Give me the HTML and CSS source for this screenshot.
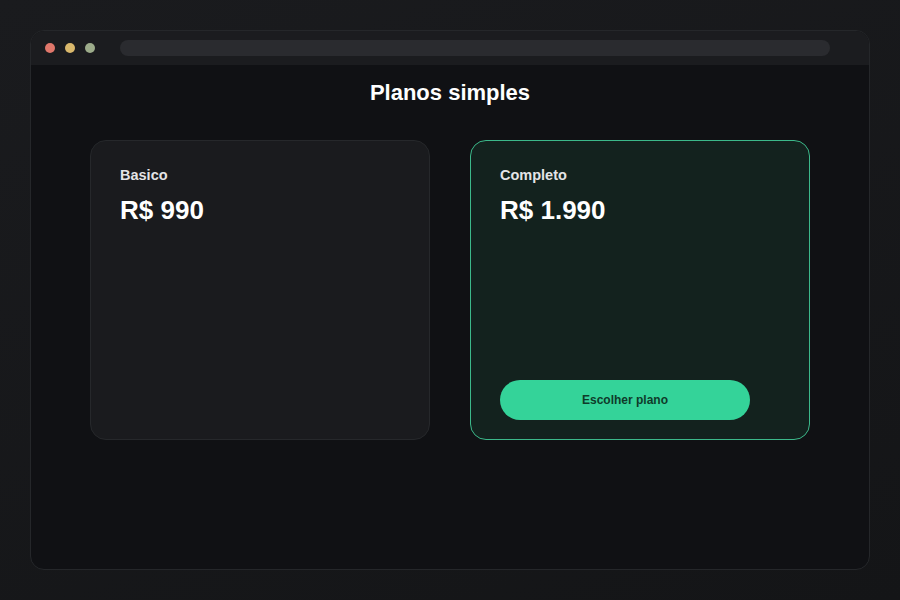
FILE: index.html
```html
<!DOCTYPE html>
<html lang="pt">
<head>
    <meta charset="UTF-8">
    <meta name="viewport" content="width=device-width, initial-scale=1.0">
    <title>Planos simples</title>
    <link rel="stylesheet" href="styles.css">
</head>
<body>
    <div class="window">
        <div class="titlebar">
            <span class="dot red"></span>
            <span class="dot yellow"></span>
            <span class="dot green"></span>
            <div class="address"></div>
        </div>
        <div class="content">
            <h1>Planos simples</h1>
            <div class="plans">
                <div class="card">
                    <div class="plan-name">Basico</div>
                    <div class="price">R$ 990</div>
                </div>
                <div class="card featured">
                    <div class="plan-name">Completo</div>
                    <div class="price">R$ 1.990</div>
                    <button class="choose">Escolher plano</button>
                </div>
            </div>
        </div>
    </div>
</body>
</html>
```

FILE: styles.css
```css
body {
    margin: 0;
    height: 600px;
    background: linear-gradient(160deg, #1a1b1e 0%, #141517 100%);
    font-family: "Liberation Sans", Arial, sans-serif;
    overflow: hidden;
}
.window {
    margin: 30px;
    height: 538px;
    border: 1px solid #25272a;
    border-radius: 14px;
    background-color: #101114;
    overflow: hidden;
    display: flex;
    flex-direction: column;
}
.titlebar {
    height: 34px;
    background-color: #1b1c1f;
    display: flex;
    align-items: center;
    padding: 0 0 0 14px;
    flex-shrink: 0;
}
.dot {
    width: 10px;
    height: 10px;
    border-radius: 50%;
    margin-right: 10px;
}
.red { background-color: #e0776b; }
.yellow { background-color: #d9b86c; }
.green { background-color: #9cab8a; }
.address {
    margin-left: 15px;
    width: 710px;
    height: 16px;
    border-radius: 8px;
    background-color: #2a2b2f;
}
.content {
    flex: 1;
    display: flex;
    flex-direction: column;
    align-items: center;
}
h1 {
    margin: 16px 0 0;
    font-size: 22px;
    line-height: 24px;
    color: #ffffff;
}
.plans {
    display: flex;
    gap: 40px;
    margin-top: 35px;
}
.card {
    width: 279px;
    height: 249px;
    padding: 30px 30px 19px 29px;
    border: 1px solid #26282b;
    border-radius: 16px;
    background-color: #1a1b1e;
    display: flex;
    flex-direction: column;
}
.featured {
    background-color: #13221e;
    border-color: #3cb88a;
}
.plan-name {
    font-size: 14.5px;
    font-weight: bold;
    line-height: 16px;
    color: #e4e4e6;
    margin-top: -4px;
}
.price {
    margin-top: 13px;
    font-size: 26px;
    font-weight: bold;
    line-height: 28px;
    color: #ffffff;
}
.choose {
    margin-top: auto;
    width: 250px;
    height: 40px;
    border: none;
    border-radius: 20px;
    background-color: #34d399;
    color: #0f3b2a;
    font-family: "Liberation Sans", Arial, sans-serif;
    font-size: 12px;
    font-weight: bold;
    cursor: pointer;
}
```
